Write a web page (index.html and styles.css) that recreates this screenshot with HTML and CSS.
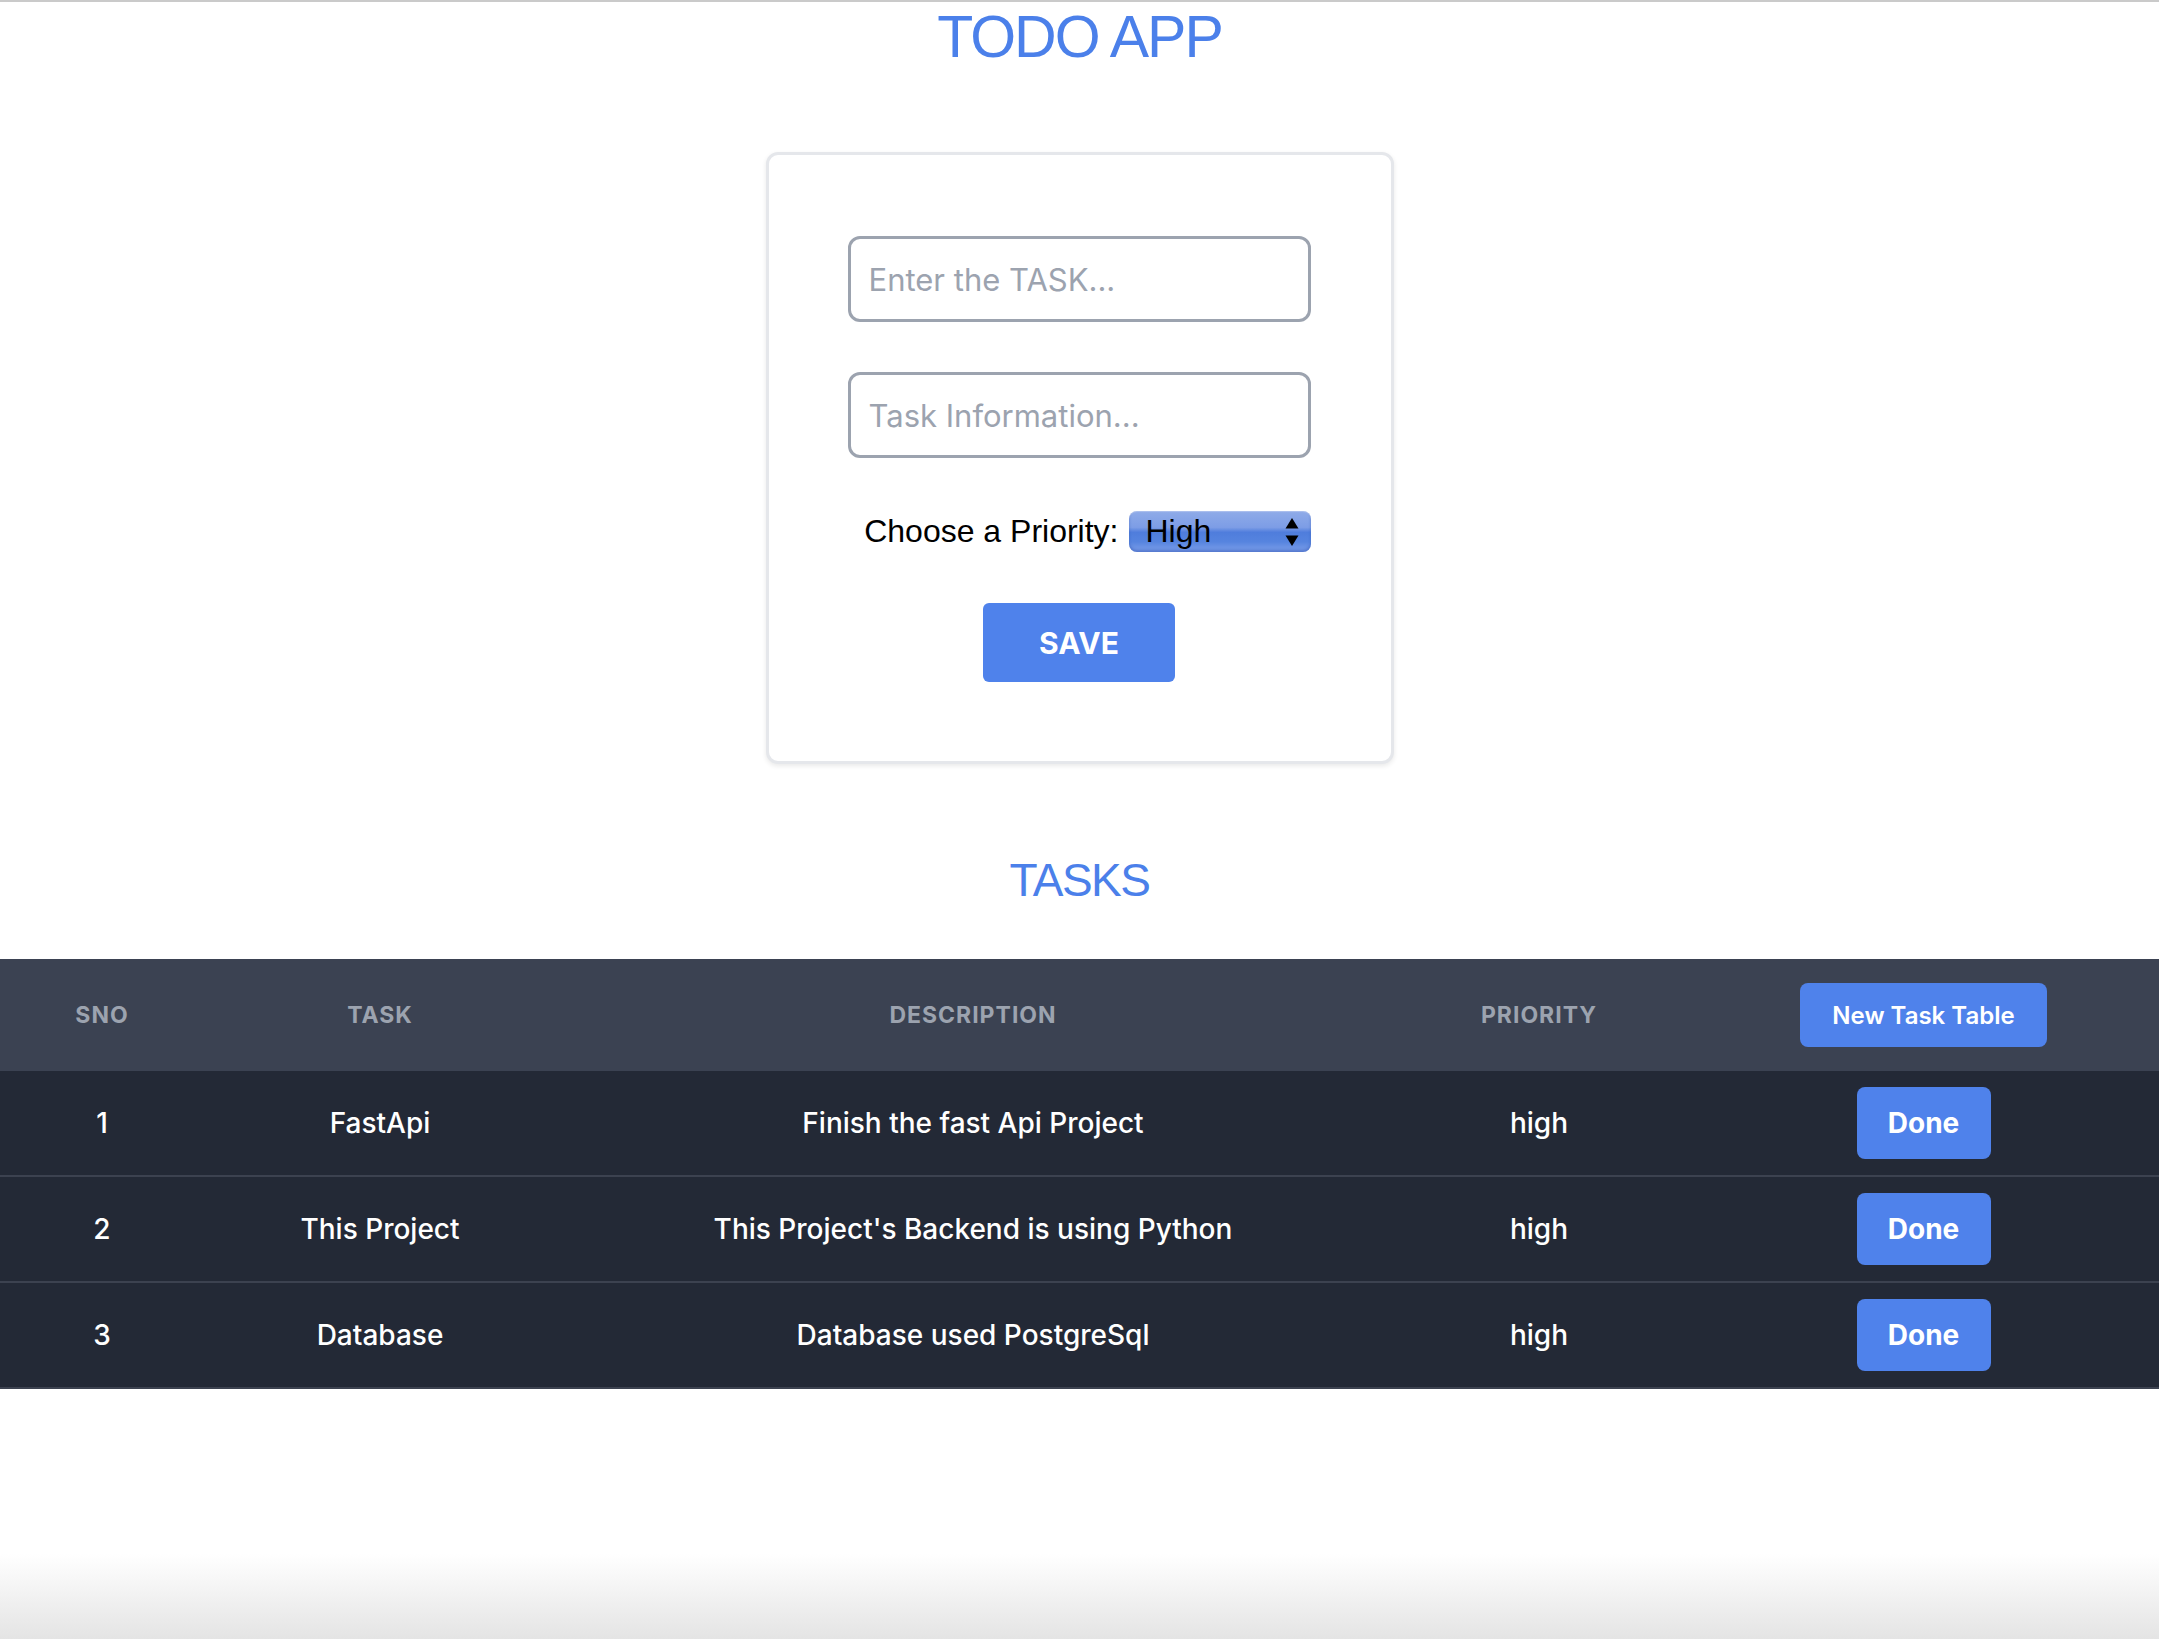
FILE: index.html
```html
<!DOCTYPE html>
<html lang="en">

<head>
    <meta charset="UTF-8">
    <meta name="viewport" content="width=device-width, initial-scale=1.0">
    <title>Todo App</title>
    <link rel="stylesheet" href="styles.css">
</head>

<body>
    <main class="page">
        <h1 class="app-title">TODO APP</h1>

        <form class="task-card" onsubmit="return false">
            <input type="text" class="task-input" placeholder="Enter the TASK...">
            <input type="text" class="task-input" placeholder="Task Information...">
            <div class="priority-row">
                <label for="priority">Choose a Priority:</label>
                <span class="select-wrap">
                    <select id="priority">
                        <option>High</option>
                        <option>Medium</option>
                        <option>Low</option>
                    </select>
                    <svg class="select-arrows" width="14" height="30" viewBox="0 0 14 30">
                        <path d="M7 1 L13.5 11.5 L0.5 11.5 Z" fill="#000" />
                        <path d="M0.5 18.5 L13.5 18.5 L7 29 Z" fill="#000" />
                    </svg>
                </span>
            </div>
            <button type="submit" class="save-btn">SAVE</button>
        </form>

        <h2 class="tasks-title">TASKS</h2>

        <table class="task-table">
            <colgroup>
                <col style="width: 204px">
                <col style="width: 352px">
                <col style="width: 834px">
                <col style="width: 298px">
                <col>
            </colgroup>
            <thead>
                <tr>
                    <th>Sno</th>
                    <th>Task</th>
                    <th>Description</th>
                    <th>Priority</th>
                    <th><button type="button" class="new-table-btn">New Task Table</button></th>
                </tr>
            </thead>
            <tbody>
                <tr>
                    <td>1</td>
                    <td>FastApi</td>
                    <td>Finish the fast Api Project</td>
                    <td>high</td>
                    <td><button type="button" class="done-btn">Done</button></td>
                </tr>
                <tr>
                    <td>2</td>
                    <td>This Project</td>
                    <td>This Project's Backend is using Python</td>
                    <td>high</td>
                    <td><button type="button" class="done-btn">Done</button></td>
                </tr>
                <tr>
                    <td>3</td>
                    <td>Database</td>
                    <td>Database used PostgreSql</td>
                    <td>high</td>
                    <td><button type="button" class="done-btn">Done</button></td>
                </tr>
            </tbody>
        </table>
    </main>
</body>

</html>
```

FILE: styles.css
```css
html {
    height: 100%;
    background: linear-gradient(to bottom, #ffffff 0, #ffffff calc(100% - 85px), #e4e4e4 100%);
}

body {
    margin: 0;
    padding: 0;
    min-height: 100%;
    box-sizing: border-box;
    border-top: 2px solid #cacaca;
    font-family: Inter, "Noto Sans", sans-serif;
}

.page {
    display: flex;
    flex-direction: column;
    align-items: center;
}

.app-title {
    margin: 3px 0 0;
    font-family: "Liberation Sans", Arial, sans-serif;
    font-weight: normal;
    font-size: 59px;
    line-height: 64px;
    letter-spacing: -2px;
    color: #4b80ea;
}

.task-card {
    margin-top: 83px;
    width: 628px;
    box-sizing: border-box;
    padding: 81px 80px 79px 79px;
    border: 3px solid #e5e7eb;
    border-radius: 12px;
    box-shadow: 0 2px 5px rgba(0, 0, 0, 0.09);
    background-color: #fff;
    display: flex;
    flex-direction: column;
}

.task-input {
    height: 86px;
    box-sizing: border-box;
    padding: 0 18px;
    border: 3px solid #9ca3af;
    border-radius: 12px;
    font-family: Inter, sans-serif;
    font-size: 31px;
    color: #111;
    outline: none;
}

.task-input::placeholder {
    color: #9ca3af;
}

.task-input + .task-input {
    margin-top: 50px;
}

.priority-row {
    margin-top: 53px;
    height: 41px;
    display: flex;
    align-items: center;
    justify-content: flex-end;
    gap: 10px;
    font-family: "Liberation Sans", Arial, sans-serif;
    font-size: 32px;
    color: #000;
}

.select-wrap {
    position: relative;
    display: inline-block;
}

.select-wrap select {
    appearance: none;
    -webkit-appearance: none;
    width: 182px;
    height: 41px;
    padding: 0 34px 0 17px;
    border: none;
    border-radius: 8px;
    font-family: "Liberation Sans", Arial, sans-serif;
    font-size: 32px;
    line-height: 41px;
    color: #000;
    background: linear-gradient(to bottom, #8fabe8 0%, #7d9de6 40%, #4f7ddc 52%, #5684df 75%, #7fa0ea 100%);
    box-shadow: inset 0 -2px 3px rgba(30, 70, 170, 0.45), inset 0 1px 1px rgba(255, 255, 255, 0.3);
}

.select-arrows {
    position: absolute;
    right: 12px;
    top: 6px;
    pointer-events: none;
}

.save-btn {
    margin: 51px auto 0;
    width: 192px;
    height: 79px;
    border: none;
    border-radius: 6px;
    background-color: #4f82eb;
    color: #fff;
    font-family: Inter, sans-serif;
    font-weight: bold;
    font-size: 30px;
    cursor: pointer;
}

.tasks-title {
    margin: 89px 0 0;
    font-family: "Liberation Sans", Arial, sans-serif;
    font-weight: normal;
    font-size: 46px;
    line-height: 54px;
    letter-spacing: -1.5px;
    color: #4b80ea;
}

.task-table {
    margin-top: 52px;
    width: 100%;
    table-layout: fixed;
    border-collapse: collapse;
    text-align: center;
}

.task-table thead tr {
    background-color: #3b4252;
}

.task-table th {
    padding: 24px 0;
    font-size: 23px;
    font-weight: 700;
    letter-spacing: 1px;
    text-transform: uppercase;
    color: #9ca3af;
}

.task-table tbody tr {
    background-color: #232936;
    border-bottom: 2px solid #3c4250;
}

.task-table td {
    padding: 16px 0;
    height: 72px;
    font-size: 28px;
    font-weight: 500;
    color: #fff;
}

.new-table-btn {
    display: block;
    margin: 0 auto;
    width: 247px;
    height: 64px;
    border: none;
    border-radius: 8px;
    background-color: #4f82eb;
    color: #fff;
    font-family: Inter, sans-serif;
    font-size: 24px;
    font-weight: 600;
    letter-spacing: 0;
    text-transform: none;
    cursor: pointer;
}

.done-btn {
    display: block;
    margin: 0 auto;
    width: 134px;
    height: 72px;
    border: none;
    border-radius: 8px;
    background-color: #4f82eb;
    color: #fff;
    font-family: Inter, sans-serif;
    font-size: 28px;
    font-weight: bold;
    cursor: pointer;
}
```
